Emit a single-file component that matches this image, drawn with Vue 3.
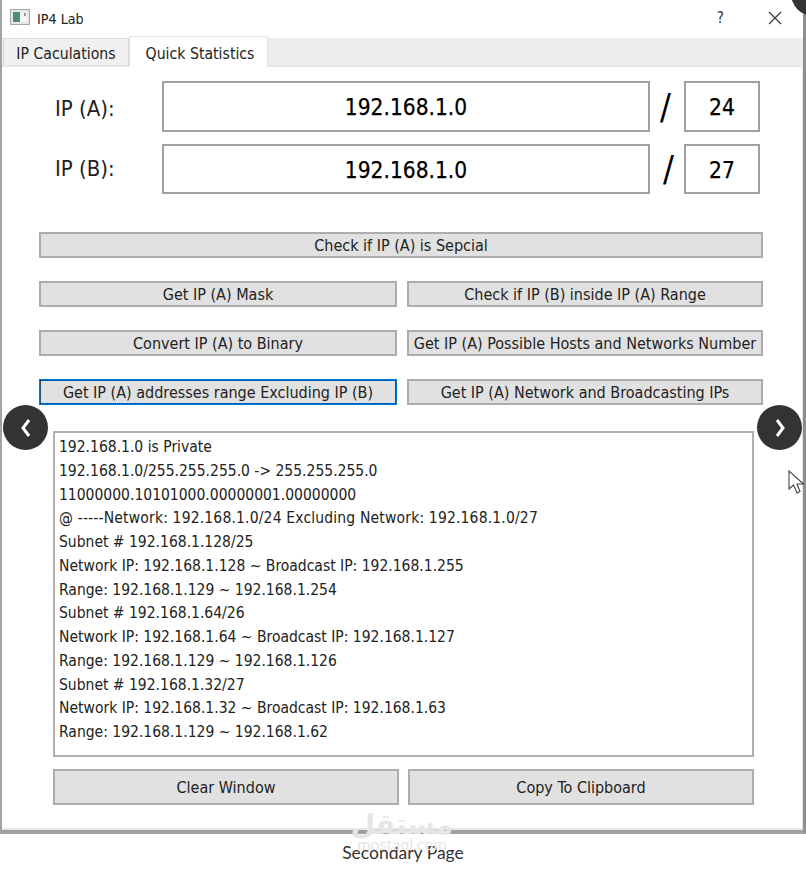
<script setup>
const lines = [
  '192.168.1.0 is Private',
  '192.168.1.0/255.255.255.0 -> 255.255.255.0',
  '11000000.10101000.00000001.00000000',
  '@ -----Network: 192.168.1.0/24 Excluding Network: 192.168.1.0/27',
  'Subnet # 192.168.1.128/25',
  'Network IP: 192.168.1.128 ~ Broadcast IP: 192.168.1.255',
  'Range: 192.168.1.129 ~ 192.168.1.254',
  'Subnet # 192.168.1.64/26',
  'Network IP: 192.168.1.64 ~ Broadcast IP: 192.168.1.127',
  'Range: 192.168.1.129 ~ 192.168.1.126',
  'Subnet # 192.168.1.32/27',
  'Network IP: 192.168.1.32 ~ Broadcast IP: 192.168.1.63',
  'Range: 192.168.1.129 ~ 192.168.1.62'
]
const actions = [
  { label: 'Get IP (A) Mask' },
  { label: 'Check if IP (B) inside IP (A) Range' },
  { label: 'Convert IP (A) to Binary' },
  { label: 'Get IP (A) Possible Hosts and Networks Number' },
  { label: 'Get IP (A) addresses range Excluding IP (B)', focused: true },
  { label: 'Get IP (A) Network and Broadcasting IPs' }
]
</script>

<template>
  <div class="page">
    <div class="window">
      <header class="titlebar">
        <svg class="app-icon" width="20" height="16" viewBox="0 0 20 16">
          <rect x="0.5" y="0.5" width="19" height="15" fill="#e6e8e6" stroke="#a9a9a9" />
          <rect x="3" y="3" width="7" height="10" fill="#4f8a80" />
          <rect x="10" y="3" width="7" height="10" fill="#f4f4f4" />
          <rect x="14" y="4" width="2" height="3" fill="#8f9aa8" />
        </svg>
        <span class="title">IP4 Lab</span>
        <span class="help">?</span>
        <svg class="close" width="14" height="14" viewBox="0 0 14 14">
          <path d="M1 1 L13 13 M13 1 L1 13" stroke="#333" stroke-width="1.1" fill="none" />
        </svg>
      </header>

      <nav class="tabs">
        <div class="tab">IP Caculations</div>
        <div class="tab active">Quick Statistics</div>
      </nav>

      <main class="pane">
        <section class="form">
          <div class="form-row">
            <label class="ip-label lowered">IP (A):</label>
            <div class="field wide">192.168.1.0</div>
            <span class="slash">/</span>
            <div class="field small">24</div>
          </div>
          <div class="form-row second">
            <label class="ip-label raised">IP (B):</label>
            <div class="field wide">192.168.1.0</div>
            <span class="slash shifted">/</span>
            <div class="field small">27</div>
          </div>
        </section>

        <section class="actions">
          <button class="btn full">Check if IP (A) is Sepcial</button>
          <button v-for="a in actions" :key="a.label" class="btn" :class="{ focused: a.focused }">
            <span class="btn-inner">{{ a.label }}</span>
          </button>
        </section>

        <section class="output">
          <div v-for="(l, i) in lines" :key="i" class="line" :class="{ spaced: i === 3 }">{{ l }}</div>
        </section>

        <section class="bottom">
          <button class="btn tall">Clear Window</button>
          <button class="btn tall">Copy To Clipboard</button>
        </section>
      </main>
    </div>

    <footer class="caption">Secondary Page</footer>

    <div class="watermark" aria-hidden="true">
      <span class="wm-ar">مستقل</span>
      <span class="wm-en">mostaql.com</span>
    </div>

    <div class="nav-circle left">
      <svg width="12" height="20" viewBox="0 0 12 20"><path d="M9 2 L3 10 L9 18" fill="none" stroke="#fff" stroke-width="3" /></svg>
    </div>
    <div class="nav-circle right">
      <svg width="12" height="20" viewBox="0 0 12 20"><path d="M3 2 L9 10 L3 18" fill="none" stroke="#fff" stroke-width="3" /></svg>
    </div>
    <div class="nav-circle corner"></div>

    <svg class="cursor" width="18" height="26" viewBox="0 0 18 26">
      <path d="M1 1 L1 19 L5.5 15 L9 23 L12 21.5 L9 14 L15.5 14 Z" fill="#fff" stroke="#444" stroke-width="1.1" />
    </svg>
  </div>
</template>

<style scoped>
.page {
  position: relative;
  width: 806px;
  height: 872px;
  overflow: hidden;
  background: #fff;
  font-family: "DejaVu Sans", sans-serif;
  font-stretch: condensed;
  color: #111;
}
.window {
  box-sizing: border-box;
  width: 806px;
  height: 834px;
  background: #fff;
  border-left: 2px solid #a3a3a3;
  border-right: 3px solid #8e8e8e;
  border-bottom: 4px solid #a0a0a0;
  display: flex;
  flex-direction: column;
}
.titlebar {
  height: 38px;
  display: flex;
  align-items: center;
  flex: none;
}
.app-icon { margin: -4px 0 0 8px; }
.title {
  margin-left: 7px;
  font-size: 14.2px;
  color: #222;
}
.help {
  margin: -2px 0 0 auto;
  font-size: 15px;
  color: #333;
}
.close {
  margin: -2px 21px 0 44px;
}
.tabs {
  height: 29px;
  flex: none;
  background: #eeeeee;
  display: flex;
  align-items: flex-end;
  border-bottom: 2px solid #e6e6e6;
  box-sizing: border-box;
  padding-left: 1px;
}
.tab {
  box-sizing: border-box;
  height: 27px;
  width: 126px;
  background: #f0f0f0;
  border: 1px solid #d9d9d9;
  border-bottom: none;
  font-size: 15.7px;
  line-height: 29px;
  text-align: center;
  color: #222;
}
.tab.active {
  height: 31px;
  width: 139px;
  margin-bottom: -2px;
  padding-left: 3px;
  background: #fff;
  border: 1px solid #e2e2e2;
  border-bottom: none;
  line-height: 33px;
}
.pane {
  flex: 1;
  border-right: 1px solid #e6e6e6;
  border-bottom: 2px solid #e6e6e6;
}
.form {
  padding: 14px 0 0 53px;
}
.form-row {
  display: flex;
  align-items: center;
  height: 51px;
}
.form-row.second {
  margin-top: 12px;
  height: 50px;
}
.ip-label {
  width: 107px;
  font-size: 22px;
  color: #222;
}
.ip-label.lowered { margin-top: 4px; }
.ip-label.raised { margin-top: -2px; }
.field {
  box-sizing: border-box;
  height: 100%;
  border: 2px solid #a0a0a0;
  display: flex;
  align-items: center;
  justify-content: center;
  font-size: 22.5px;
  -webkit-text-stroke: 0.25px #000;
  color: #000;
  padding-top: 1px;
}
.field.wide { width: 488px; }
.field.small { width: 76px; }
.slash {
  width: 34px;
  padding-right: 3px;
  box-sizing: border-box;
  text-align: center;
  font-size: 36px;
  color: #000;
  line-height: 1;
}
.slash.shifted { padding: 0 0 0 3px; }
.actions {
  margin: 38px 0 0 37px;
  display: grid;
  grid-template-columns: 358px 356px;
  column-gap: 10px;
  row-gap: 23px;
}
.btn {
  box-sizing: border-box;
  height: 26px;
  padding: 1px 0 0;
  background: #e1e1e1;
  border: 2px solid #adadad;
  border-radius: 0;
  font-family: inherit;
  font-stretch: inherit;
  font-size: 16px;
  color: #222;
}
.btn.full {
  grid-column: 1 / span 2;
}
.btn.focused {
  border-color: #0078d7;
  padding: 0;
}
.btn.focused .btn-inner {
  display: flex;
  align-items: center;
  justify-content: center;
  height: 100%;
  outline: 1px dotted #333;
  outline-offset: 0;
}
.btn.tall {
  width: 346px;
  height: 36px;
}
.output {
  box-sizing: border-box;
  margin: 26px 0 0 51px;
  width: 701px;
  height: 326px;
  border: 2px solid #b0b0b0;
  padding: 3px 4px;
  font-size: 15.5px;
  color: #222;
}
.line {
  line-height: 23.75px;
  white-space: nowrap;
}
.line.spaced { letter-spacing: 0.17px; }
.bottom {
  margin: 12px 0 0 51px;
  display: flex;
  gap: 9px;
}
.caption {
  text-align: center;
  font-family: Lato, sans-serif;
  font-stretch: normal;
  font-size: 17.5px;
  line-height: 16px;
  margin-top: 11px;
  color: #333;
}
.watermark {
  position: absolute;
  left: 340px;
  top: 815px;
  width: 124px;
  display: flex;
  flex-direction: column;
  align-items: center;
  color: #e6e6e6;
  pointer-events: none;
}
.wm-ar {
  font-size: 28px;
  font-weight: 700;
  line-height: 20px;
  font-stretch: normal;
}
.wm-en {
  font-family: Lato, sans-serif;
  font-stretch: normal;
  font-size: 16px;
  line-height: 10px;
  margin-top: 4px;
}
.nav-circle {
  position: absolute;
  width: 45px;
  height: 45px;
  border-radius: 50%;
  background: #333;
  display: flex;
  align-items: center;
  justify-content: center;
}
.nav-circle.left { left: 3px; top: 405px; }
.nav-circle.right { left: 757px; top: 405px; }
.nav-circle.corner { left: 791px; top: -29px; }
.cursor {
  position: absolute;
  left: 788px;
  top: 470px;
}
</style>
